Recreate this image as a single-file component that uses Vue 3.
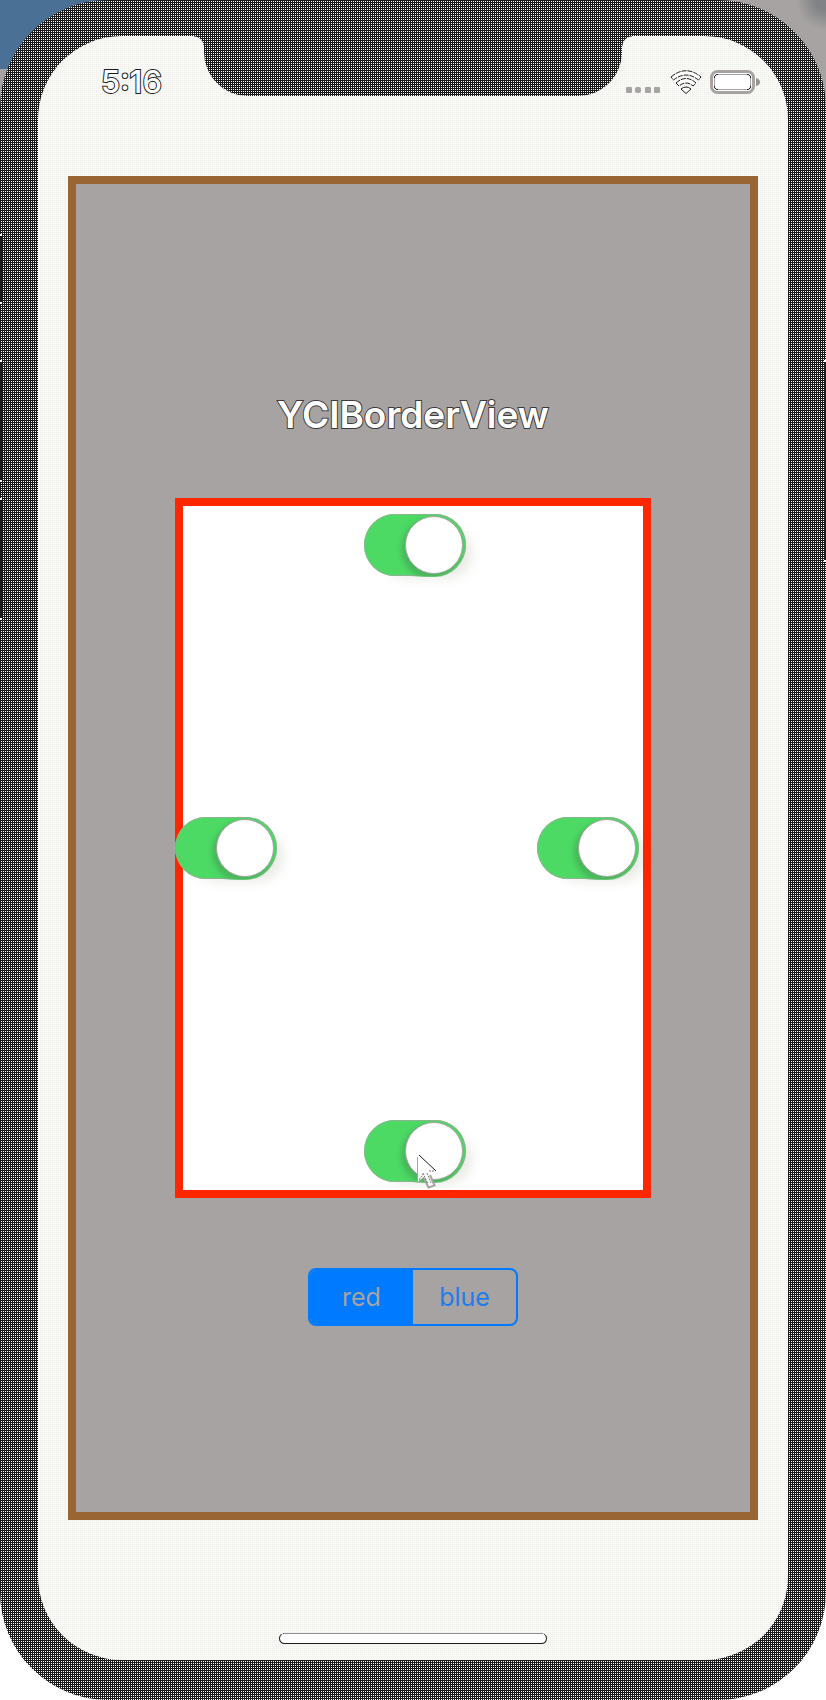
<script setup>
import { ref } from 'vue'

const top = ref(true)
const left = ref(true)
const right = ref(true)
const bottom = ref(true)
const color = ref('red')
</script>

<template>
  <div class="desktop">
    <div class="phone">
      <i class="key mute"></i>
      <i class="key volume-up"></i>
      <i class="key volume-down"></i>
      <i class="key power"></i>
      <div class="screen">
        <div class="notch"></div>
        <header class="status">
          <time class="clock">5:16</time>
          <div class="indicators">
            <svg class="dots" width="34" height="7" viewBox="0 0 34 7" fill="#a7a3a2">
              <rect width="6" height="6" rx="1" />
              <rect x="9" width="6" height="6" rx="2" />
              <rect x="19" width="6" height="6" rx="1" />
              <rect x="28" width="6" height="6" rx="1" />
            </svg>
            <svg class="wifi" width="32" height="24" viewBox="0 0 32 24" fill="#fff" stroke="#1c1c1c" stroke-width="1">
              <path d="M1 7 Q16 -5.500 31 7 L28.500 10 Q16 0 3.500 10 Z" stroke-dasharray="5 1" />
              <path d="M6 13 Q16 4 26 13 L23 16 Q16 10 9 16 Z" stroke-dasharray="5 1" />
              <path d="M11 19 Q16 15 21 19 L16 23.500 Z" />
            </svg>
            <svg class="battery" width="50" height="24" viewBox="0 0 50 24">
              <rect x="1.500" y="1.500" width="42" height="21" rx="6" fill="#fff" stroke="#a7a3a2" stroke-width="3" />
              <rect x="4.500" y="4.500" width="36" height="15" rx="3" fill="#fff" stroke="#a7a3a2" />
              <path d="M4.500 8V6.500L6.500 4.500H8M37 4.500H38.500L40.500 6.500V8M40.500 16V17.500L38.500 19.500H37M8 19.500H6.500L4.500 17.500V16" fill="none" stroke="#1c1c1c" />
              <path d="M46 8 Q50 9 50 12 Q50 15 46 16 Z" fill="#96938f" />
            </svg>
          </div>
        </header>

        <main class="panel">
          <h1 class="title">YCIBorderView</h1>
          <section class="border-view" aria-label="Borders">
            <input v-model="top" class="switch" type="checkbox" role="switch" aria-label="Top border" />
            <div class="sides">
              <input v-model="left" class="switch" type="checkbox" role="switch" aria-label="Left border" />
              <input v-model="right" class="switch" type="checkbox" role="switch" aria-label="Right border" />
            </div>
            <div class="bottom">
              <input v-model="bottom" class="switch" type="checkbox" role="switch" aria-label="Bottom border" />
              <svg class="pointer" width="26" height="38" viewBox="0 0 26 38">
                <path d="M1 1V32L8 26L13 37L19 34L14 24H23Z" fill="#fff" />
                <path d="M1.500 6V31.500L8 26" fill="none" stroke="#a7a3a2" />
                <path d="M8 27L12.500 36.500L18.500 34.500L14 24" fill="none" stroke="#a7a3a2" stroke-width="2" />
                <path d="M3 4L20 20" stroke="#1c1c1c" />
                <path d="M3 29L7 23M11 22L15 32M7 22L12 33M13 20H19" fill="none" stroke="#777" stroke-dasharray="2 1" />
              </svg>
            </div>
          </section>
          <div class="segments" role="group" aria-label="Border color">
            <button type="button" :class="{ on: color === 'red' }" :aria-pressed="color === 'red'" @click="color = 'red'">red</button>
            <button type="button" :class="{ on: color === 'blue' }" :aria-pressed="color === 'blue'" @click="color = 'blue'">blue</button>
          </div>
        </main>

        <footer class="home"><span class="bar"></span></footer>
      </div>
    </div>
  </div>
</template>

<style>
body {
  margin: 0;
  background: #fff;
}
</style>

<style scoped>
* {
  box-sizing: border-box;
}

.desktop {
  font-family: Inter, "Liberation Sans", sans-serif;
  background:
    linear-gradient(#4b7095, #4b7095) 0 0 / 50% 69px no-repeat,
    radial-gradient(circle at 100% 0, #808285 0, #808285 10px, #a7a3a2 30px) 100% 0 / 50% 110px no-repeat,
    linear-gradient(#a7a3a2, #a7a3a2) 0 0 / 100% 110px no-repeat,
    #fff;
}

.phone,
.notch,
.notch::before,
.notch::after {
  background-color: #1a1a1a;
  background-image: conic-gradient(from 90deg at 1px 1px, #fff 90deg, #1a1a1a 0);
  background-size: 2px 2px;
}

.phone {
  position: relative;
  display: flex;
  min-height: 100vh;
  padding: 36px 38px 40px;
  border-radius: 108px;
}

.key {
  position: absolute;
  left: 0;
  width: 2px;
  background: #1c1c1c;
  border: solid #fff;
  border-width: 2px 0;
}

.mute {
  top: 234px;
  height: 70px;
}

.volume-up {
  top: 360px;
  height: 122px;
}

.volume-down {
  top: 498px;
  height: 122px;
}

.power {
  left: auto;
  right: 0;
  top: 360px;
  height: 202px;
}

.screen {
  position: relative;
  display: flex;
  flex: 1;
  flex-direction: column;
  border-radius: 84px;
  background: conic-gradient(from 90deg at 1px 1px, #fff 90deg, #f3f3ef 0) 0 0 / 2px 2px;
}

.notch {
  position: absolute;
  top: 0;
  left: 50%;
  width: 418px;
  height: 60px;
  margin-left: -209px;
  border-radius: 0 0 44px 44px;
}

.notch::before,
.notch::after {
  content: "";
  position: absolute;
  top: 0;
  left: -10px;
  width: 10px;
  height: 10px;
  mask-image: radial-gradient(circle at 0 100%, transparent 9px, #000 10px);
}

.notch::after {
  left: auto;
  right: -10px;
  mask-image: radial-gradient(circle at 100% 100%, transparent 9px, #000 10px);
}

.status {
  display: flex;
  justify-content: space-between;
  align-items: flex-start;
  height: 140px;
  padding: 34px 28px 0 63px;
}

.clock {
  font-size: 31px;
  line-height: 24px;
  font-weight: 500;
  color: #fff;
  -webkit-text-stroke: 2px #1c1c1c;
  paint-order: stroke fill;
}

.indicators {
  display: flex;
  align-items: flex-start;
}

.dots {
  margin-top: 17px;
}

.wifi {
  margin-left: 10px;
}

.battery {
  margin-left: 8px;
}

.panel {
  display: flex;
  flex: 1;
  flex-direction: column;
  align-items: center;
  margin: 0 30px;
  padding-top: 209px;
  border: 8px solid #996633;
  background: #a7a3a2;
}

.title {
  margin: 0 0 61px;
  font-size: 37px;
  line-height: 44px;
  font-weight: 600;
  color: #fff;
  -webkit-text-stroke: 2px #3c3a3a;
  paint-order: stroke fill;
}

.border-view {
  display: flex;
  flex-direction: column;
  align-items: center;
  justify-content: space-between;
  width: 476px;
  max-width: 100%;
  aspect-ratio: 17 / 25;
  padding: 16px 8px 16px 12px;
  background: #fff;
  box-shadow: inset 0 0 0 8px #ff2600;
}

.sides {
  display: flex;
  justify-content: space-between;
  align-self: stretch;
  margin-left: -12px;
  padding-right: 4px;
}

.switch {
  appearance: none;
  display: flex;
  justify-content: flex-end;
  align-items: center;
  width: 102px;
  height: 62px;
  margin: 0;
  padding: 0 3px;
  border-radius: 31px;
  background: #4cd964;
  box-shadow: inset 0 0 0 1px #8fb392, 12px 8px 12px -6px rgba(70, 70, 30, 0.12);
}

.switch::before {
  content: "";
  width: 56px;
  height: 56px;
  border: 1px solid #a7a3a2;
  border-radius: 50%;
  background: #fff;
  box-shadow: -3px 4px 5px 1px #47b85b;
  clip-path: inset(-3px -3px -3px -20px round 31px);
}

.switch:not(:checked) {
  justify-content: flex-start;
  background: #e5e5e5;
}

.bottom {
  position: relative;
  display: flex;
}

.pointer {
  position: absolute;
  left: 52px;
  top: 31px;
}

.segments {
  display: flex;
  width: 210px;
  height: 58px;
  margin-top: 70px;
  border: 2px solid #007aff;
  border-radius: 8px;
  overflow: hidden;
}

.segments button {
  flex: 1;
  padding: 0;
  border: 0;
  background: none;
  font-family: inherit;
  font-size: 25px;
  color: #1f7de8;
}

.segments .on {
  background: #007aff;
  color: #a7a3a2;
}

.home {
  display: flex;
  justify-content: center;
  align-items: flex-end;
  height: 140px;
  padding-bottom: 16px;
}

.bar {
  width: 268px;
  height: 11px;
  border: 1px solid #1c1c1c;
  border-top-style: dotted;
  border-radius: 6px;
  background: #fff;
}
</style>
